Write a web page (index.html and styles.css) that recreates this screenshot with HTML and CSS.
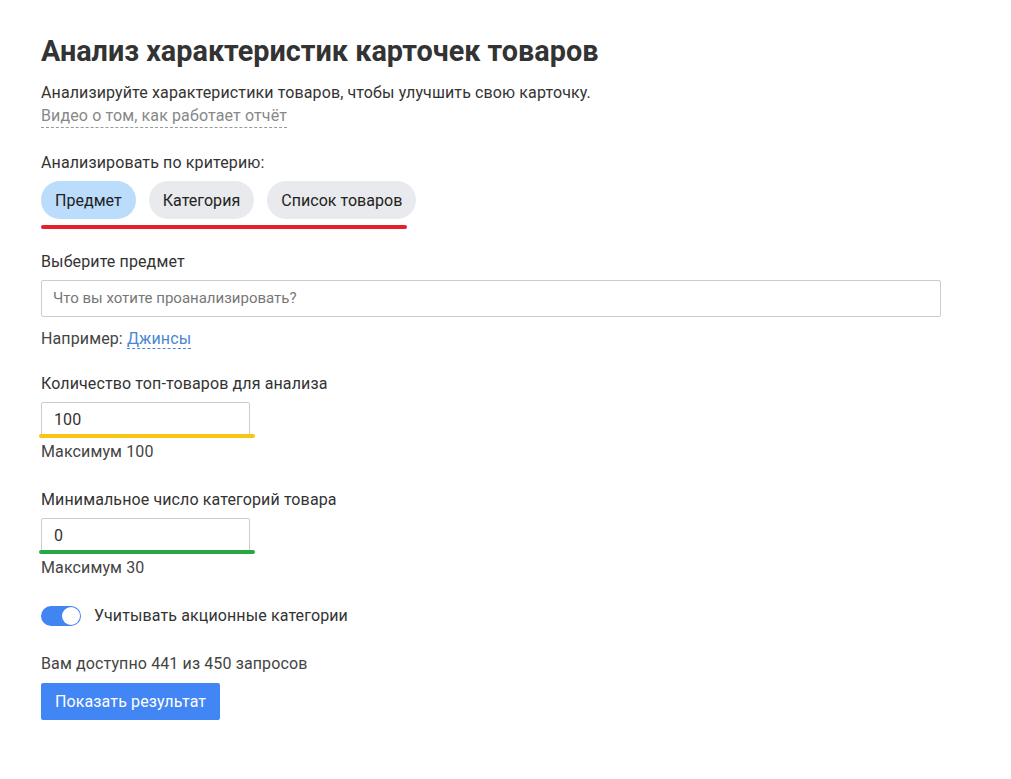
FILE: index.html
```html
<!DOCTYPE html>
<html lang="ru">
<head>
<meta charset="utf-8">
<title>Анализ характеристик карточек товаров</title>
<link rel="stylesheet" href="styles.css">
</head>
<body>
<main class="page">
  <h1 class="title">Анализ характеристик карточек товаров</h1>
  <p class="subtitle">Анализируйте характеристики товаров, чтобы улучшить свою карточку.</p>
  <a class="video-link" href="#">Видео о том, как работает отчёт</a>

  <div class="label label-criteria">Анализировать по критерию:</div>
  <div class="chips">
    <button class="chip chip-active">Предмет</button>
    <button class="chip">Категория</button>
    <button class="chip">Список товаров</button>
  </div>
  <div class="mark mark-red"></div>

  <div class="label label-section">Выберите предмет</div>
  <div class="search-input">Что вы хотите проанализировать?</div>
  <div class="example">Например: <a class="example-link" href="#">Джинсы</a></div>

  <div class="label label-section">Количество топ-товаров для анализа</div>
  <div class="num-wrap">
    <div class="num-input">100</div>
    <div class="mark mark-yellow"></div>
  </div>
  <div class="hint">Максимум 100</div>

  <div class="label label-section2">Минимальное число категорий товара</div>
  <div class="num-wrap">
    <div class="num-input">0</div>
    <div class="mark mark-green"></div>
  </div>
  <div class="hint">Максимум 30</div>

  <div class="toggle-row">
    <span class="toggle"><span class="knob"></span></span>
    <span class="toggle-label">Учитывать акционные категории</span>
  </div>

  <div class="quota">Вам доступно 441 из 450 запросов</div>
  <button class="submit">Показать результат</button>
</main>
</body>
</html>
```

FILE: styles.css
```css
html, body {
  margin: 0;
  padding: 0;
  background: #ffffff;
}
body {
  font-family: Roboto, "Noto Sans", "Liberation Sans", sans-serif;
  color: #333333;
  font-size: 16px;
  line-height: 24px;
  letter-spacing: 0.12px;
}
.page {
  padding: 33px 41px 40px;
  display: flex;
  flex-direction: column;
  align-items: flex-start;
}
.title {
  margin: 0;
  font-size: 28.8px;
  line-height: 36px;
  font-weight: 700;
  letter-spacing: 0;
  color: #333333;
}
.subtitle {
  margin: 12px 0 0;
  font-size: 16px;
  line-height: 24px;
  color: #333333;
}
.video-link {
  color: #888888;
  text-decoration: none;
  font-size: 16px;
  line-height: 22px;
  border-bottom: 1px dashed #999999;
}
.label {
  font-size: 16px;
  line-height: 24px;
  color: #333333;
}
.label-criteria { margin-top: 23px; }
.label-section { margin-top: 21px; }
.label-section2 { margin-top: 24px; }
.chips {
  display: flex;
  gap: 13px;
  margin-top: 6px;
}
.chip {
  font-family: inherit;
  font-size: 16px;
  letter-spacing: 0.04px;
  color: #222222;
  background: #e8eaed;
  border: none;
  border-radius: 19px;
  height: 38px;
  padding: 0 14px;
  cursor: pointer;
}
.chip-active {
  background: #bcdcfb;
}
.mark {
  height: 4px;
  border-radius: 2px;
}
.mark-red {
  width: 366px;
  background: #e3202b;
  margin-top: 6px;
}
.search-input {
  box-sizing: border-box;
  width: 900px;
  height: 37px;
  margin-top: 6px;
  border: 1px solid #cccccc;
  border-radius: 2px;
  padding: 0 11px;
  font-size: 15px;
  line-height: 35px;
  letter-spacing: 0;
  color: #777777;
}
.example {
  margin-top: 10px;
  color: #444444;
}
.example-link {
  color: #4a86d4;
  text-decoration: none;
  border-bottom: 1px dashed #4a86d4;
}
.num-wrap {
  position: relative;
  margin-top: 6px;
}
.num-input {
  box-sizing: border-box;
  width: 209px;
  height: 35px;
  border: 1px solid #cccccc;
  border-radius: 2px;
  padding: 0 12px;
  font-size: 16px;
  line-height: 33px;
  color: #333333;
}
.num-wrap .mark {
  position: absolute;
  left: -2px;
  top: 32px;
  width: 216px;
}
.mark-yellow { background: #f7c614; }
.mark-green { background: #27a844; left: 0; }
.hint {
  margin-top: 3px;
  color: #444444;
}
.toggle-row {
  display: flex;
  align-items: center;
  gap: 13px;
  margin-top: 24px;
  height: 24px;
}
.toggle {
  box-sizing: border-box;
  width: 40px;
  height: 20px;
  border-radius: 10px;
  background: #4185f2;
  display: flex;
  align-items: center;
  justify-content: flex-end;
  padding: 1px;
}
.knob {
  width: 18px;
  height: 18px;
  border-radius: 50%;
  background: #ffffff;
}
.toggle-label {
  color: #333333;
}
.quota {
  margin-top: 24px;
  color: #444444;
}
.submit {
  margin-top: 7px;
  font-family: inherit;
  font-size: 16px;
  letter-spacing: inherit;
  color: #ffffff;
  background: #4285f4;
  border: none;
  border-radius: 2px;
  height: 37px;
  padding: 0 14px;
  cursor: pointer;
}
```
